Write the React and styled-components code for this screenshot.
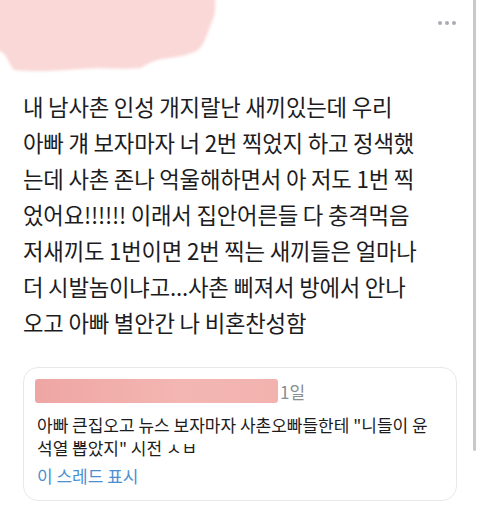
import React from "react";
import styled, { createGlobalStyle } from "styled-components";

const GlobalStyle = createGlobalStyle`
  html, body {
    margin: 0;
    padding: 0;
    background: #ffffff;
  }
  body {
    font-family: "Noto Sans CJK KR", "Noto Sans", sans-serif;
    color: #1c1c1e;
  }
`;

const Page = styled.div`
  position: relative;
  width: 480px;
  height: 519px;
  overflow: hidden;
  background: #fff;
`;

const Header = styled.div`
  display: flex;
  align-items: flex-start;
  justify-content: space-between;
  height: 88px;
`;

const Blob = styled.svg`
  display: block;
  width: 225px;
  height: 78px;
`;

const MoreDots = styled.div`
  display: flex;
  gap: 3px;
  margin: 21px 24px 0 0;
  span {
    width: 4px;
    height: 4px;
    border-radius: 50%;
    background: #a9adb3;
  }
`;

const Body = styled.div`
  padding: 0 23px;
`;

const TweetText = styled.p`
  margin: 0;
  font-size: 22.3px;
  line-height: 36px;
  letter-spacing: -0.2px;
  color: #1c1c1e;
  white-space: nowrap;
`;

const QuoteCard = styled.div`
  margin-top: 27px;
  width: 434px;
  box-sizing: border-box;
  border: 1px solid #e6e8eb;
  border-radius: 15px;
  padding: 11px 13px 13px;
`;

const QuoteHead = styled.div`
  display: flex;
  align-items: center;
  height: 24px;
`;

const Redact = styled.span`
  display: block;
  width: 243px;
  height: 24px;
  margin-left: -2px;
  border-radius: 3px;
  background: linear-gradient(90deg, #eea6a4 0%, #f1aeab 30%, #f3b6b2 60%, #f2b3af 100%);
`;

const Time = styled.span`
  margin-left: 2px;
  font-size: 17px;
  color: #8a8d91;
`;

const QuoteText = styled.p`
  margin: 10px 0 0;
  font-size: 17px;
  line-height: 23px;
  color: #1c1c1e;
  white-space: nowrap;
`;

const ThreadLink = styled.div`
  margin-top: 5px;
  font-size: 17px;
  line-height: 23px;
  color: #4a8fd0;
`;

const Scrollbar = styled.div`
  position: absolute;
  top: 0;
  right: 4px;
  width: 3px;
  height: 451px;
  border-radius: 0 0 2px 2px;
  background: #c9c9cc;
`;

export default function App() {
  return (
    <Page>
      <GlobalStyle />
      <Header>
        <Blob viewBox="0 0 225 78">
          <defs>
            <filter id="soft" x="-20%" y="-20%" width="140%" height="140%">
              <feGaussianBlur stdDeviation="1.8" />
            </filter>
          </defs>
          <path
            d="M-6 -6 L214 -6 C217 6 215 18 210 26 C207 36 204 44 198 50 C190 55 178 57 162 59 C152 61 147 64 141 68 C120 70 100 67 80 69 C56 71 30 72 14 70 C8 63 8 55 0 51 L-6 51 Z"
            fill="#f9d8d7"
            filter="url(#soft)"
          />
        </Blob>
        <MoreDots>
          <span />
          <span />
          <span />
        </MoreDots>
      </Header>
      <Body>
        <TweetText>
          내 남사촌 인성 개지랄난 새끼있는데 우리
          <br />
          아빠 걔 보자마자 너 2번 찍었지 하고 정색했
          <br />
          는데 사촌 존나 억울해하면서 아 저도 1번 찍
          <br />
          었어요!!!!!! 이래서 집안어른들 다 충격먹음
          <br />
          저새끼도 1번이면 2번 찍는 새끼들은 얼마나
          <br />
          더 시발놈이냐고...사촌 삐져서 방에서 안나
          <br />
          오고 아빠 별안간 나 비혼찬성함
        </TweetText>
        <QuoteCard>
          <QuoteHead>
            <Redact />
            <Time>1일</Time>
          </QuoteHead>
          <QuoteText>
            아빠 큰집오고 뉴스 보자마자 사촌오빠들한테 "니들이 윤
            <br />
            석열 뽑았지" 시전 ㅅㅂ
          </QuoteText>
          <ThreadLink>이 스레드 표시</ThreadLink>
        </QuoteCard>
      </Body>
      <Scrollbar />
    </Page>
  );
}
